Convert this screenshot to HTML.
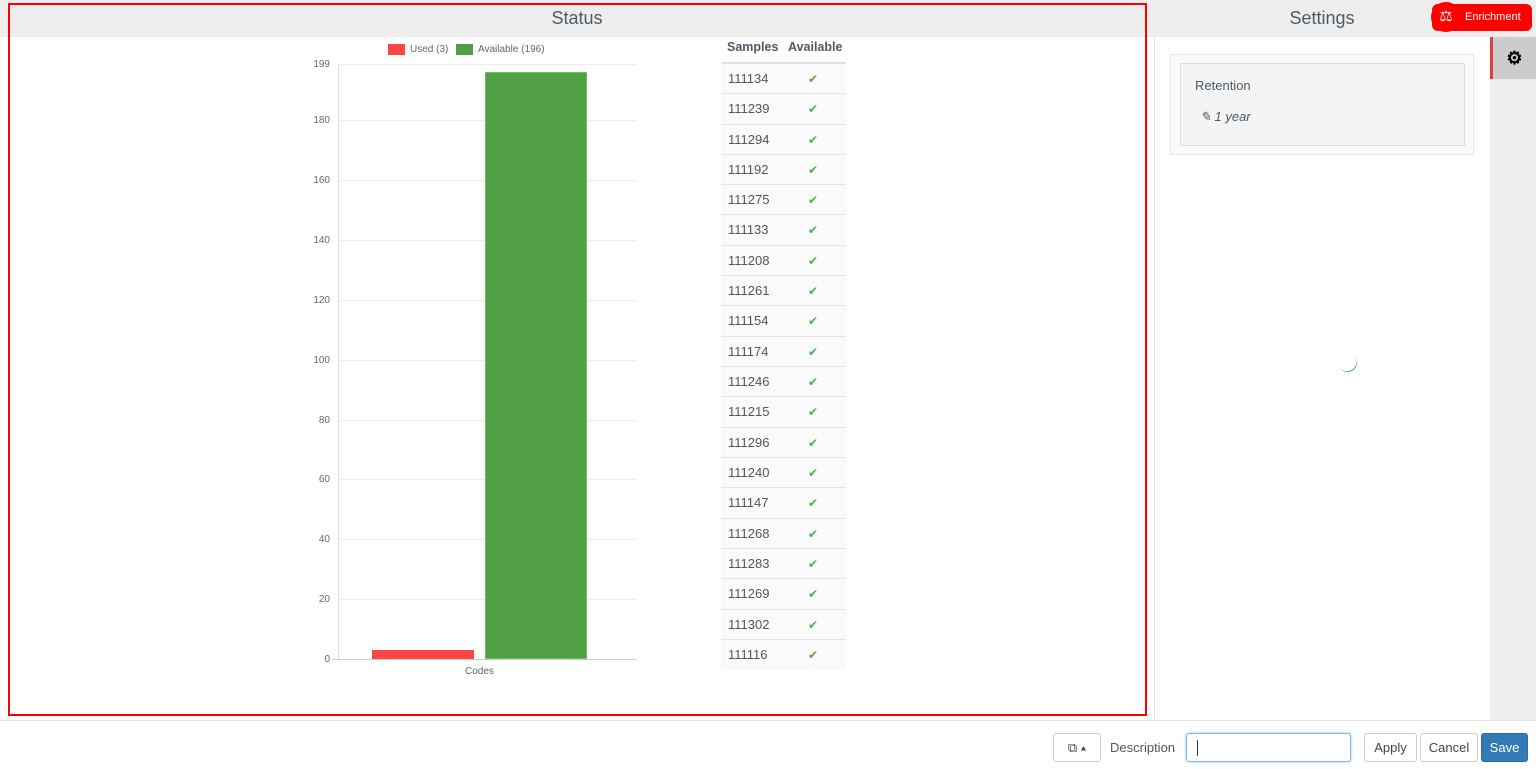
<!DOCTYPE html><html><head><style>
body{margin:0;width:1536px;height:769px;overflow:hidden;background:#fff;font-family:"Liberation Sans",sans-serif;position:relative;color:#555}
.a{position:absolute}
.hdr{top:0;height:37px;background:#eeeeee;font-size:18px;color:#4d5a66;text-align:center;line-height:36px}
.row{position:absolute;left:721px;width:125px;height:30px;border-top:1px solid #e4e4e4;background:#fafafa;font-size:13px;color:#555;line-height:30px}
.row span{position:absolute;left:7px}
.row i{position:absolute;left:87px;top:0;color:#4caf50;font-style:normal;font-size:12px}
.yl{position:absolute;right:1206px;font-size:10px;color:#666;width:40px;text-align:right}
.gl{position:absolute;left:338px;width:299px;height:1px;background:#ececec}
.btn{position:absolute;top:733px;border:1px solid #ccc;border-radius:3px;background:#fff;font-size:13px;color:#444;text-align:center;line-height:27px;box-sizing:border-box;height:29px}
</style></head><body>
<div class="a hdr" style="left:0;width:1154px">Status</div>
<div class="a hdr" style="left:1154px;width:382px;padding-right:46px;box-sizing:border-box;text-align:center">Settings</div>
<div class="a" style="left:1432px;top:4px;width:100px;height:27px;background:#f00;border-radius:6px;color:#fff;font-size:11px;line-height:27px;text-indent:33px">Enrichment</div>
<div class="a" style="left:1431px;top:2px;width:30px;height:30px;border-radius:50%;background:#f00;color:#fff;font-size:15px;text-align:center;line-height:30px">⚖</div>
<div class="a" style="left:8px;top:3px;width:1135px;height:709px;border:2px solid #f00"></div>
<div class="a" style="left:388px;top:44px;width:17px;height:11px;background:#ff4444"></div>
<div class="a" style="left:410px;top:44px;font-size:10px;color:#666">Used (3)</div>
<div class="a" style="left:456px;top:44px;width:17px;height:11px;background:#52a046"></div>
<div class="a" style="left:478px;top:44px;font-size:10px;color:#666">Available (196)</div>
<div class="gl" style="top:64px"></div><div class="gl" style="top:120px"></div><div class="gl" style="top:180px"></div><div class="gl" style="top:240px"></div><div class="gl" style="top:300px"></div><div class="gl" style="top:360px"></div><div class="gl" style="top:420px"></div><div class="gl" style="top:479px"></div><div class="gl" style="top:539px"></div><div class="gl" style="top:599px"></div>
<div class="a" style="left:338px;top:64px;width:1px;height:596px;background:#ddd"></div>
<div class="a" style="left:332px;top:659px;width:305px;height:1px;background:#ccc"></div>
<div class="yl" style="top:59px">199</div><div class="yl" style="top:115px">180</div><div class="yl" style="top:175px">160</div><div class="yl" style="top:235px">140</div><div class="yl" style="top:295px">120</div><div class="yl" style="top:355px">100</div><div class="yl" style="top:415px">80</div><div class="yl" style="top:474px">60</div><div class="yl" style="top:534px">40</div><div class="yl" style="top:594px">20</div><div class="yl" style="top:654px">0</div>
<div class="a" style="left:372px;top:650px;width:102px;height:9px;background:#ff4444"></div>
<div class="a" style="left:485px;top:72px;width:102px;height:587px;background:#52a046;box-sizing:border-box;border:1px solid #6bbf5f"></div>
<div class="a" style="left:465px;top:666px;font-size:10px;color:#666">Codes</div>
<div class="a" style="left:727px;top:40px;font-size:12.5px;font-weight:bold;color:#4d5a66">Samples</div>
<div class="a" style="left:788px;top:40px;font-size:12.5px;font-weight:bold;color:#4d5a66">Available</div>
<div class="a" style="left:721px;top:62px;width:125px;height:2px;background:#ddd"></div>
<div class="row" style="top:63px"><span>111134</span><i>✔</i></div>
<div class="row" style="top:93px"><span>111239</span><i>✔</i></div>
<div class="row" style="top:124px"><span>111294</span><i>✔</i></div>
<div class="row" style="top:154px"><span>111192</span><i>✔</i></div>
<div class="row" style="top:184px"><span>111275</span><i>✔</i></div>
<div class="row" style="top:214px"><span>111133</span><i>✔</i></div>
<div class="row" style="top:245px"><span>111208</span><i>✔</i></div>
<div class="row" style="top:275px"><span>111261</span><i>✔</i></div>
<div class="row" style="top:305px"><span>111154</span><i>✔</i></div>
<div class="row" style="top:336px"><span>111174</span><i>✔</i></div>
<div class="row" style="top:366px"><span>111246</span><i>✔</i></div>
<div class="row" style="top:396px"><span>111215</span><i>✔</i></div>
<div class="row" style="top:427px"><span>111296</span><i>✔</i></div>
<div class="row" style="top:457px"><span>111240</span><i>✔</i></div>
<div class="row" style="top:487px"><span>111147</span><i>✔</i></div>
<div class="row" style="top:518px"><span>111268</span><i>✔</i></div>
<div class="row" style="top:548px"><span>111283</span><i>✔</i></div>
<div class="row" style="top:578px"><span>111269</span><i>✔</i></div>
<div class="row" style="top:609px"><span>111302</span><i>✔</i></div>
<div class="row" style="top:639px"><span>111116</span><i>✔</i></div>
<div class="a" style="left:1154px;top:37px;width:1px;height:683px;background:#e4e4e4"></div>
<div class="a" style="left:1490px;top:37px;width:46px;height:683px;background:#eeeeee"></div>
<div class="a" style="left:1490px;top:37px;width:46px;height:42px;background:#cccccc;border-left:3px solid #e04040;box-sizing:border-box;text-align:center;line-height:42px;font-size:18px;color:#000;font-weight:bold">⚙</div>
<div class="a" style="left:1170px;top:54px;width:302px;height:99px;border:1px solid #e8e8e8;background:#fafafa"></div>
<div class="a" style="left:1180px;top:63px;width:283px;height:81px;border:1px solid #ddd;background:#f4f4f4"></div>
<div class="a" style="left:1195px;top:78px;font-size:13px;color:#4d5a66">Retention</div>
<div class="a" style="left:1200px;top:109px;font-size:13px;color:#4d5a66;font-style:italic">✎ 1 year</div>
<div class="a" style="left:1337px;top:351px;width:20px;height:20px;border-radius:50%;border-bottom:1px solid #3a86d0;transform:rotate(-30deg)"></div>
<div class="a" style="left:0;top:720px;width:1536px;height:1px;background:#e6e6e6"></div>
<div class="btn" style="left:1053px;width:48px">⧉ ▴</div>
<div class="a" style="left:1110px;top:740px;font-size:13px;color:#555">Description</div>
<div class="a" style="left:1186px;top:733px;width:165px;height:29px;border:1px solid #80b6e8;border-radius:3px;box-sizing:border-box;box-shadow:0 0 3px #9cc8f0"><div style="position:absolute;left:10px;top:6px;width:1px;height:16px;background:#333"></div></div>
<div class="btn" style="left:1364px;width:53px">Apply</div>
<div class="btn" style="left:1420px;width:58px">Cancel</div>
<div class="btn" style="left:1481px;width:47px;background:#337ab7;border-color:#2e6da4;color:#fff">Save</div>
</body></html>
